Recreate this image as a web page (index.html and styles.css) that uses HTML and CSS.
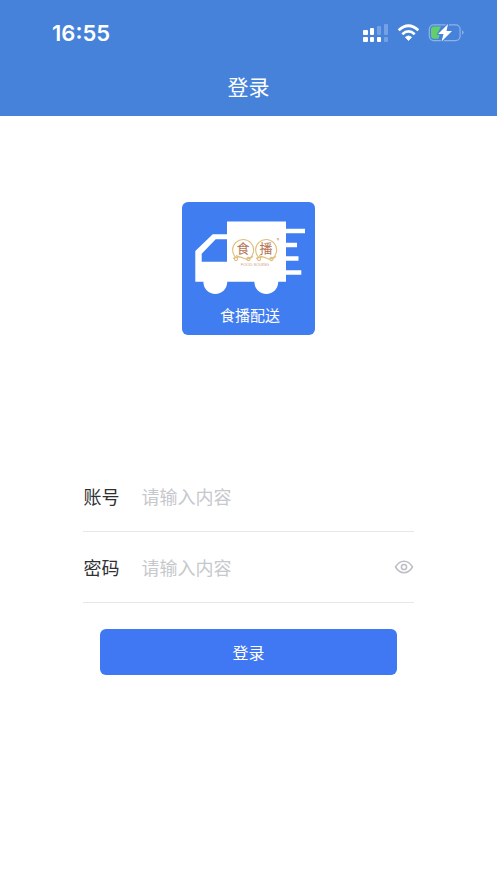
FILE: index.html
```html
<!DOCTYPE html>
<html lang="zh-CN">
<head>
<meta charset="utf-8">
<meta name="viewport" content="width=device-width, initial-scale=1">
<title>登录</title>
<link rel="stylesheet" href="styles.css">
</head>
<body>
<header class="header">
  <div class="status">
    <time class="clock">16:55</time>
    <svg class="status-icons" width="102" height="20" viewBox="0 0 102 20" aria-hidden="true">
      <g fill="#fff">
        <rect x="1" y="7" width="5" height="5" rx="1"/>
        <rect x="8" y="5" width="4" height="7" rx="1"/>
        <rect x="15" y="3" width="4" height="9" rx="1" opacity=".25"/>
        <rect x="22" y="1" width="4" height="11" rx="1" opacity=".25"/>
        <rect x="1" y="14" width="5" height="5" rx="1"/>
        <rect x="8" y="14" width="4" height="5" rx="1"/>
        <rect x="15" y="14" width="4" height="5" rx="1"/>
        <rect x="22" y="14" width="4" height="5" rx="1" opacity=".25"/>
      </g>
      <g fill="none" stroke="#fff" stroke-width="2.700">
        <path d="M36.700 7.300Q46.500-1.800 56.300 7.300"/>
        <path d="M40.300 11.200Q46.500 5.400 52.700 11.200"/>
      </g>
      <path d="M43.400 14.200Q46.500 11.600 49.600 14.200L46.500 17.600Z" fill="#fff" stroke="#fff" stroke-width=".8" stroke-linejoin="round"/>
      <rect x="67.300" y="1.800" width="30.800" height="15.800" rx="4.500" fill="none" stroke="#8eb3e9" stroke-width="1.200"/>
      <path d="M100 7.300Q101.600 8 101.600 9.500T100 11.700Z" fill="#8eb3e9"/>
      <path d="M72 3.500H79L75.500 10.500H78L76.500 15.800H72Q69 15.800 69 12.500V6.500Q69 3.500 72 3.500Z" fill="#62ce6c"/>
      <path d="M86 1L76 11H81.500L79.500 18.500L90 8H84.500Z" fill="#fff" stroke="#4682da" stroke-width="2" paint-order="stroke" stroke-linejoin="round"/>
    </svg>
  </div>
  <h1 class="title">登录</h1>
</header>
<main class="main">
  <svg class="logo" viewBox="0 0 133 133" role="img" aria-label="食播配送">
    <rect width="133" height="133" rx="6" fill="#407df0"/>
    <g fill="#fff">
      <path fill-rule="evenodd" d="M45 19.500H104V79.700H13.300V49L30.700 32.300H45ZM45 37.300H33.700L19.700 51.700V59.700H45Z"/>
      <circle cx="33.300" cy="80" r="11.900"/>
      <circle cx="84.300" cy="80" r="11.900"/>
      <path d="M103 26.700H123V31.200H103ZM103 40.700H115V45.200H103ZM103 54.300H116.500V58.800H103ZM103 68.300H119.300V72.800H103Z"/>
    </g>
    <g fill="none" stroke="#dfbd7c" stroke-width="1.100">
      <path d="M53.500 55.200A10.500 10.500 0 1 1 68.500 55.500M76.500 55.200A10.500 10.500 0 1 1 91.500 55.500"/>
      <path d="M51 56.500Q56 53.500 61 56T71 54.500M74 56.500Q79 53.500 84 56T94 54.500M54 53.500L65 57.500M77 53.500L88 57.500"/>
      <circle cx="54" cy="57" r="1.600"/>
      <circle cx="66.500" cy="57" r="1.600"/>
      <circle cx="77" cy="57" r="1.600"/>
      <circle cx="89.500" cy="57" r="1.600"/>
    </g>
    <g class="brand" text-anchor="middle">
      <text class="brand-name" x="61" y="51">食</text>
      <text class="brand-name" x="84" y="51">播</text>
      <text class="brand-mark" x="96" y="40">®</text>
      <text class="brand-sub" x="73" y="64">FOOD SOUING</text>
    </g>
    <text class="logo-text" x="68" y="119" text-anchor="middle">食播配送</text>
  </svg>
  <form class="form">
    <div class="field">
      <label class="label" for="account">账号</label>
      <input class="input" id="account" type="text" placeholder="请输入内容">
    </div>
    <div class="field">
      <label class="label" for="password">密码</label>
      <input class="input" id="password" type="password" placeholder="请输入内容">
      <button class="reveal" type="button" aria-label="显示密码">
        <svg width="20" height="16" viewBox="0 0 20 16" fill="none" stroke="#bcbec4" stroke-width="1.500" aria-hidden="true">
          <path d="M1.500 8Q5 2.200 10 2.200T18.500 8Q15 13.800 10 13.800T1.500 8Z" stroke-linejoin="round"/>
          <circle cx="10" cy="8" r="2.600"/>
        </svg>
      </button>
    </div>
    <button class="submit" type="submit">登录</button>
  </form>
</main>
</body>
</html>
```
FILE: styles.css
```css
* {
  box-sizing: border-box;
}

body {
  margin: 0;
  background: #fff;
  color: #303133;
  font-family: "Noto Sans CJK SC", sans-serif;
}

.header {
  padding-bottom: 14px;
  background: #4682da;
  color: #fff;
}

.status {
  display: flex;
  align-items: center;
  justify-content: space-between;
  height: 66px;
  padding: 0 33px 0 52px;
}

.clock {
  font: 600 22px/24px Inter, sans-serif;
}

.title {
  margin: 0;
  padding: 4px 0 0;
  font-size: 21px;
  font-weight: 400;
  line-height: 32px;
  text-align: center;
}

.main {
  display: flex;
  flex-direction: column;
  align-items: center;
  padding: 86px 16px 40px;
}

.logo {
  width: 133px;
  height: 133px;
}

.logo-text {
  fill: #fff;
  font-size: 15px;
}

.brand {
  fill: #b57550;
}

.brand-name {
  font-size: 13px;
}

.brand-mark {
  font-size: 5px;
}

.brand-sub {
  fill: #cf9d7c;
  font: 4px "Liberation Sans", sans-serif;
}

.form {
  width: 71%;
  margin-top: 126px;
}

.field {
  display: flex;
  align-items: center;
  height: 71px;
  border-bottom: 1px solid #e6e7ea;
}

.label {
  flex: none;
  width: 58px;
  font-size: 18px;
}

.input {
  flex: 1;
  min-width: 0;
  height: 40px;
  padding: 0;
  border: 0;
  outline: 0;
  background: transparent;
  color: inherit;
  font: inherit;
  font-size: 18px;
}

.input::placeholder {
  color: #c6c8cc;
  opacity: 1;
}

.reveal {
  display: flex;
  padding: 0;
  border: 0;
  background: transparent;
}

.submit {
  display: block;
  width: 90%;
  height: 46px;
  margin: 26px auto 0;
  padding: 0;
  border: 0;
  border-radius: 6px;
  background: #4077f3;
  color: #fff;
  font: inherit;
  font-size: 16px;
}
```
